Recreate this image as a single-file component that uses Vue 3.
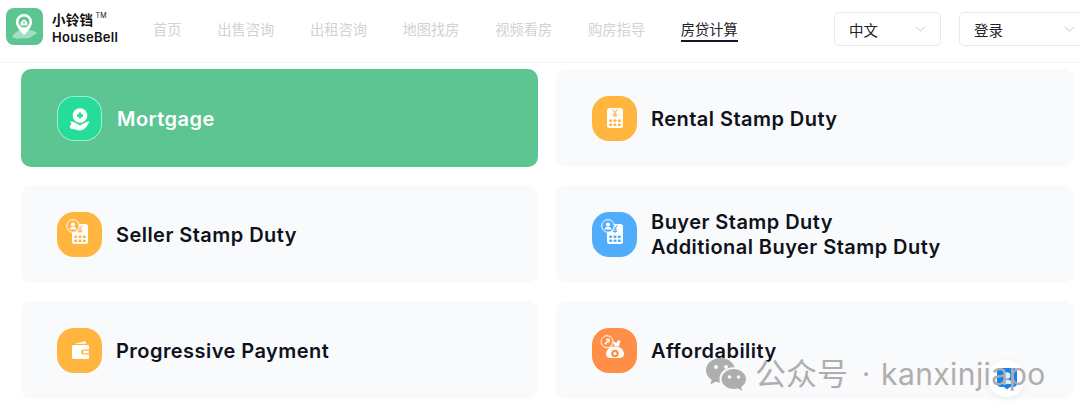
<script setup>
const nav = ["首页", "出售咨询", "出租咨询", "地图找房", "视频看房", "购房指导", "房贷计算"];
const cards = [
  { lines: ["Mortgage"], color: "#25dc9b", icon: "pin", active: true },
  { lines: ["Rental Stamp Duty"], color: "#ffb53e", icon: "calc" },
  { lines: ["Seller Stamp Duty"], color: "#ffb53e", icon: "calcUser" },
  { lines: ["Buyer Stamp Duty", "Additional Buyer Stamp Duty"], color: "#50adfc", icon: "calcUser" },
  { lines: ["Progressive Payment"], color: "#ffb53e", icon: "wallet" },
  { lines: ["Affordability"], color: "#ff8f47", icon: "bag" },
];
</script>

<template>
  <div class="page">
    <header class="header">
      <div class="logo">
        <svg width="37" height="37" viewBox="0 0 37 37">
          <rect width="37" height="37" rx="8" fill="#5cc592" />
          <path d="M6 29c2-4 5-6 8-7l4 3 4-3c3 0 7 1 9 3-2 2-4 2-6 4-3 2-6 1-9 1-3 1-7 1-10-1z" fill="#fff" opacity=".45" />
          <path d="M18 27c-5-5-8-9-8-13a8 8 0 0 1 16 0c0 4-3 8-8 13z" fill="#fff" />
          <circle cx="18" cy="14" r="5.500" fill="#5cc592" />
          <path d="M14.600 14.200 18 11.200l3.400 3v3.300h-6.800z" fill="#fff" />
          <circle cx="18" cy="14.600" r="1" fill="#5cc592" />
        </svg>
        <div class="logo-text">
          <div class="logo-cn">小铃铛<sup>TM</sup></div>
          <div class="logo-en">HouseBell</div>
        </div>
      </div>
      <nav class="nav">
        <a v-for="(n, i) in nav" :key="n" class="nav-item" :class="{ current: i === nav.length - 1 }">{{ n }}</a>
      </nav>
      <div class="selects">
        <div class="select lang">
          <span>中文</span>
          <svg class="chev" width="11" height="6" viewBox="0 0 11 6"><path d="M.7.7 5.500 5 10.300.7" fill="none" stroke="#c4c7cc" /></svg>
        </div>
        <div class="select login">
          <span>登录</span>
          <svg class="chev" width="11" height="6" viewBox="0 0 11 6"><path d="M.7.7 5.500 5 10.300.7" fill="none" stroke="#c4c7cc" /></svg>
        </div>
      </div>
    </header>

    <main class="grid">
      <div v-for="c in cards" :key="c.lines[0]" class="card" :class="{ active: c.active }">
        <div class="icon" :style="{ background: c.color }">
          <svg width="44" height="44" viewBox="0 0 44 44">
            <template v-if="c.icon === 'pin'">
              <circle cx="22" cy="19.500" r="7.300" fill="#fff" />
              <path d="M22 16.500v6M19 19.500h6" stroke="#25dc9b" stroke-width="2.400" />
              <path d="M12.500 25.500c3.500 0 6 2 9.500 4 3.500-2 6-4 9.500-4.500-1.500 5-5.500 9.500-9.500 9.500-1.500 0-3-.5-4.500-1l-3.500-.5c-1.500 0-2.500-1.500-2-3.500l1.500-1.500c-.5-1-1-1.500-1-2.500z" fill="#fff" />
            </template>
            <template v-else-if="c.icon === 'calc' || c.icon === 'calcUser'">
              <path d="M16.500 12h11a2.500 2.500 0 0 1 2.500 2.500v15a2.500 2.500 0 0 1-2.500 2.500h-11a2.500 2.500 0 0 1-2.500-2.500v-15a2.500 2.500 0 0 1 2.500-2.500z" fill="#fff" />
              <path d="M19.500 13.500l2.500 3 2.500-3M22 16.500v4.500M19.800 17.800h4.400M19.800 19.500h4.400" fill="none" :stroke="c.color" stroke-width="1.100" />
              <g :fill="c.color">
                <rect x="16.300" y="23.500" width="2.800" height="2.600" rx=".7" /><rect x="20.600" y="23.500" width="2.800" height="2.600" rx=".7" /><rect x="24.900" y="23.500" width="2.800" height="2.600" rx=".7" />
                <rect x="16.300" y="27.500" width="2.800" height="2.600" rx=".7" /><rect x="20.600" y="27.500" width="2.800" height="2.600" rx=".7" /><rect x="24.900" y="27.500" width="2.800" height="2.600" rx=".7" />
              </g>
              <template v-if="c.icon === 'calcUser'">
                <circle cx="15" cy="14" r="6.300" :fill="c.color" stroke="#fff" stroke-width="1" />
                <circle cx="15" cy="12.500" r="2.100" fill="#fff" />
                <path d="M11.300 17.600c.5-2.100 2-2.900 3.700-2.900s3.200.8 3.700 2.900z" fill="#fff" />
              </template>
            </template>
            <template v-else-if="c.icon === 'wallet'">
              <path d="M16 16l11-3 1.500 3z" fill="#fff" opacity=".85" />
              <path d="M15.500 17h14a1.500 1.500 0 0 1 1.500 1.500v3h-5.500a2.500 2.500 0 0 0 0 5H31v3a1.500 1.500 0 0 1-1.500 1.500h-14a1.500 1.500 0 0 1-1.500-1.500v-11a1.500 1.500 0 0 1 1.500-1.500z" fill="#fff" />
              <rect x="25" y="22.700" width="6" height="2.600" rx="1.300" fill="#fff" />
            </template>
            <template v-else>
              <circle cx="14" cy="13.700" r="6" fill="none" stroke="#fff" stroke-width="1" />
              <path d="M11.800 16.200l4-4M13 11.500h3v3" fill="none" stroke="#fff" stroke-width="1.500" />
              <path d="M19.500 12.500l3.500 2.500 2.500-3 2 1-1.500 5h-4.500z" fill="#fff" />
              <path d="M19 18.500h6c3.800 1.500 6 4.800 6 7.500 0 2.800-2 4-4.500 4h-9c-2.500 0-4.500-1.200-4.500-4 0-2.700 2.200-6 6-7.500z" fill="#fff" />
              <circle cx="22" cy="25.500" r="3.800" fill="#ff8f47" />
              <circle cx="22" cy="25.500" r="1.500" fill="#fff" />
            </template>
          </svg>
        </div>
        <div class="card-title">
          <div v-for="l in c.lines" :key="l">{{ l }}</div>
        </div>
      </div>
    </main>

    <div class="chat">
      <svg width="20" height="23" viewBox="0 0 20 23">
        <path d="M4 1h12a4 4 0 0 1 4 4v11a4 4 0 0 1-4 4h-3l-3 2.500L7 20H4a4 4 0 0 1-4-4V5a4 4 0 0 1 4-4z" fill="#1482f0" />
        <circle cx="10" cy="8.500" r="3.200" fill="#fff" opacity=".9" />
        <path d="M4.500 17c.6-3 2.700-4.500 5.500-4.500s4.900 1.500 5.500 4.500z" fill="#fff" opacity=".85" />
      </svg>
    </div>

    <div class="watermark">
      <svg width="42" height="33" viewBox="0 0 42 33">
        <path d="M15 0C6.700 0 0 5.400 0 12.300c0 4 2.300 7.400 5.700 9.600L4.300 26.500l5.300-2.800c1.500.4 3 .7 4.500.8-.4-1.200-.6-2.400-.6-3.700 0-6.500 6-11.600 13.500-11.600h1.600C27 4 21.500 0 15 0z" fill="#aeaeae" />
        <path d="M28 11c-7 0-12.500 4.500-12.500 10S21 31 28 31c1.300 0 2.700-.2 3.900-.5l4.400 2.300-1.100-3.800c3-2 4.800-4.900 4.800-8 0-5.500-5.800-10-12-10z" fill="#aeaeae" />
        <circle cx="23.500" cy="19" r="1.800" fill="#f8f9fb" />
        <circle cx="32.500" cy="19" r="1.800" fill="#f8f9fb" />
        <circle cx="10" cy="9" r="2" fill="#f8f9fb" />
        <circle cx="20" cy="9" r="2" fill="#f8f9fb" />
      </svg>
      <span class="wm-cn">公众号</span>
      <span class="wm-dot">·</span>
      <span class="wm-en">kanxinjiapo</span>
    </div>
  </div>
</template>

<style scoped>
.page {
  position: relative;
  width: 1080px;
  height: 417px;
  overflow: hidden;
  background: #fff;
  font-family: Inter, "Noto Sans CJK SC", sans-serif;
}
.header {
  display: flex;
  align-items: center;
  height: 63px;
  box-sizing: border-box;
  padding: 0 0 4px 6px;
  border-bottom: 1px solid #f3f4f6;
}
.logo {
  display: flex;
  align-items: center;
  gap: 9px;
  width: 147px;
  flex: none;
  margin-top: -5px;
}
.logo-text {
  color: #111;
  font-weight: 600;
  margin-top: 2px;
}
.logo-cn {
  font-size: 13.500px;
  line-height: 18px;
  letter-spacing: 0.3px;
}
.logo-cn sup {
  font-size: 7px;
  font-weight: 400;
  line-height: 0;
  vertical-align: 7px;
  margin-left: 2px;
}
.logo-en {
  font-size: 13px;
  line-height: 16px;
  letter-spacing: 0.3px;
}
.nav {
  display: flex;
  gap: 35.700px;
  flex: none;
  width: 681px;
  margin-top: 1px;
}
.nav-item {
  position: relative;
  font-size: 14.250px;
  line-height: 20px;
  color: #d0d2d7;
}
.nav-item.current {
  color: #1f2329;
}
.nav-item.current::after {
  content: "";
  position: absolute;
  left: 0;
  right: 0;
  bottom: -2px;
  height: 2px;
  background: #111827;
}
.selects {
  display: flex;
  gap: 18px;
  flex: none;
}
.select {
  display: flex;
  align-items: center;
  justify-content: space-between;
  box-sizing: border-box;
  height: 34px;
  padding: 0 14px;
  border: 1px solid #e8eaee;
  border-radius: 5px;
  font-size: 14.500px;
  color: #1f2329;
}
.lang {
  width: 107px;
}
.login {
  width: 131px;
}
.chev {
  flex: none;
}
.grid {
  display: grid;
  grid-template-columns: 517px 518px;
  grid-auto-rows: 98px;
  column-gap: 18px;
  row-gap: 18px;
  padding: 6px 0 0 21px;
}
.card {
  display: flex;
  align-items: center;
  gap: 14px;
  padding-left: 36px;
  border-radius: 10px;
  background: #f9fafc;
}
.card.active {
  background: #5cc592;
}
.card.active .icon {
  border: 1px solid rgba(255, 255, 255, 0.55);
  box-sizing: border-box;
}
.card.active .icon svg {
  margin: -1px;
}
.card.active .card-title {
  color: #fff;
  margin-left: 1px;
}
.icon {
  width: 45px;
  height: 45px;
  flex: none;
  display: flex;
  align-items: center;
  justify-content: center;
  border-radius: 17px;
}
.card-title {
  padding-top: 2px;
  font-size: 20px;
  font-weight: 560;
  line-height: 25px;
  letter-spacing: 0.45px;
  color: #0f121a;
}
.watermark {
  position: absolute;
  left: 706px;
  top: 356px;
  display: flex;
  align-items: center;
  color: #aeaeae;
}
.wm-cn {
  margin-left: 7px;
  font-size: 31px;
  line-height: 36px;
}
.wm-dot {
  margin: 0 11px 0 14px;
  font-size: 28px;
}
.wm-en {
  font-size: 30px;
  line-height: 36px;
  letter-spacing: 0.4px;
}
.chat {
  position: absolute;
  left: 988px;
  top: 360px;
  width: 37px;
  height: 37px;
  display: flex;
  align-items: center;
  justify-content: center;
  border-radius: 50%;
  background: rgba(255, 255, 255, 0.92);
  box-shadow: 0 2px 10px rgba(0, 0, 0, 0.06);
}
</style>
